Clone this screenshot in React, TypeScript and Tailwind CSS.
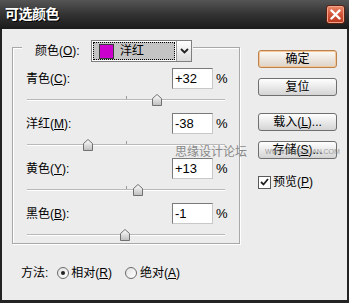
import React from "react";

type ChannelRow = {
  label: string;
  key: string;
  value: number;
};

const rows: ChannelRow[] = [
  { label: "青色(", key: "C", value: 32 },
  { label: "洋红(", key: "M", value: -38 },
  { label: "黄色(", key: "Y", value: 13 },
  { label: "黑色(", key: "B", value: -1 },
];

const fmt = (v: number) => (v > 0 ? `+${v}` : `${v}`);

const Thumb: React.FC = () => (
  <svg width="10" height="12" viewBox="0 0 10 12">
    <defs>
      <linearGradient id="thumbFill" x1="0" y1="0" x2="0" y2="1">
        <stop offset="0" stopColor="#ffffff" />
        <stop offset="1" stopColor="#bdbdbd" />
      </linearGradient>
    </defs>
    <path
      d="M0.5 4.5 L5 0.5 L9.5 4.5 V11.5 H0.5 Z"
      fill="url(#thumbFill)"
      stroke="#707070"
    />
  </svg>
);

const Slider: React.FC<{ value: number }> = ({ value }) => {
  // track is 197px wide, -100..100
  const left = ((value + 100) / 200) * 197 - 5;
  return (
    <div className="relative h-[24px] ml-[14px] w-[198px]">
      <div className="absolute left-0 right-0 top-[10px] h-[2px] bg-[#b9b9b9] border-b border-white" />
      <div className="absolute left-[99px] top-[7px] w-px h-[3px] bg-[#9a9a9a]" />
      <div className="absolute top-[5px]" style={{ left }}>
        <Thumb />
      </div>
    </div>
  );
};

const Btn: React.FC<{ children: React.ReactNode; primary?: boolean }> = ({
  children,
  primary,
}) => (
  <div
    className={
      primary
        ? "flex items-center justify-center w-[79px] h-[18px] rounded-[3px] border border-[#b9824f] bg-gradient-to-b from-[#fdfaf6] to-[#dcd3c8] shadow-[inset_0_0_0_1px_#f6c898] text-[12px] text-black"
        : "flex items-center justify-center w-[79px] h-[18px] rounded-[3px] border border-[#6f6f6f] bg-gradient-to-b from-white to-[#d4d4d4] text-[12px] text-black"
    }
  >
    {children}
  </div>
);

const Radio: React.FC<{ checked?: boolean }> = ({ checked }) => (
  <div className="flex items-center justify-center w-[12px] h-[12px] rounded-full border border-[#6a6a6a] bg-gradient-to-br from-[#e2e2e2] to-white">
    {checked && <div className="w-[4px] h-[4px] rounded-full bg-[#222]" />}
  </div>
);

export default function App() {
  return (
    <div className="w-[349px] h-[303px] flex flex-col bg-[#232323] font-['Liberation_Sans','Noto_Sans_CJK_SC',sans-serif] text-black select-none">
      {/* title bar */}
      <div className="flex items-center justify-between h-[29px] pl-[5px] pr-[4px] bg-gradient-to-b from-[#555] via-[#333] to-[#1b1b1b]">
        <span className="text-[14px] font-bold text-white tracking-[-0.5px] [text-shadow:1px_1px_0_#000]">
          可选颜色
        </span>
        <div className="flex items-center justify-center w-[19px] h-[19px] rounded-[3px] border border-[#5b2114] bg-gradient-to-b from-[#ec8a6a] via-[#d2553a] to-[#b8391f] shadow-[inset_0_0_0_1px_#f3a58a]">
          <svg width="11" height="11" viewBox="0 0 11 11">
            <path d="M1.5 1.5 L9.5 9.5 M9.5 1.5 L1.5 9.5" stroke="#fff" strokeWidth="2.4" strokeLinecap="round" />
          </svg>
        </div>
      </div>

      {/* body */}
      <div className="relative flex-1 mx-[2px] mb-[3px] bg-[#ececec] flex flex-col">
        <div className="flex">
          {/* group box */}
          <div className="mt-[18px] ml-[10px] w-[228px] h-[197px] border border-[#a8a8a8] shadow-[1px_1px_0_#fff,inset_1px_1px_0_#fff] flex flex-col">
            <div className="-mt-[8px] ml-[9px] pl-[13px] pr-[1px] w-fit flex items-center bg-[#ececec] h-[22px]">
              <span className="text-[12px] w-[56px]">
                颜色(<span className="underline">O</span>):
              </span>
              <div className="flex items-center h-[22px] w-[101px] border border-[#7f7f7f] bg-white">
                <div className="flex items-center flex-1 h-[18px] mx-[1px] bg-[#c4c4c4] border border-dotted border-black">
                  <div className="ml-[5px] w-[15px] h-[15px] border border-[#3b3b3b] bg-[#cc00cc]" />
                  <span className="ml-[6px] text-[12px]">洋红</span>
                </div>
                <div className="flex items-center justify-center w-[15px] h-[20px] border-l border-[#9a9a9a] bg-gradient-to-b from-white to-[#dcdcdc]">
                  <svg width="9" height="6" viewBox="0 0 9 6">
                    <path d="M1 1 L4.5 4.5 L8 1" fill="none" stroke="#222" strokeWidth="1.8" />
                  </svg>
                </div>
              </div>
            </div>

            <div className="mt-[6px] flex flex-col">
              {rows.map((r) => (
                <div key={r.key} className="flex flex-col">
                  <div className="flex items-center h-[21px] pl-[13px]">
                    <span className="text-[12px] w-[146px]">
                      {r.label}
                      <span className="underline">{r.key}</span>):
                    </span>
                    <div className="flex items-center w-[41px] h-[21px] border border-[#7a7a7a] border-r-[#c8c8c8] border-b-[#c8c8c8] bg-white pl-[2px] text-[13px]">
                      {fmt(r.value)}
                    </div>
                    <span className="ml-[3px] text-[13px]">%</span>
                  </div>
                  <Slider value={r.value} />
                </div>
              ))}
            </div>
          </div>

          {/* buttons */}
          <div className="ml-[18px] mt-[21px] flex flex-col">
            <Btn primary>确定</Btn>
            <div className="mt-[10px]">
              <Btn>复位</Btn>
            </div>
            <div className="mt-[17px]">
              <Btn>载入(<span className="underline">L</span>)...</Btn>
            </div>
            <div className="mt-[10px]">
              <Btn>存储(<span className="underline">S</span>)...</Btn>
            </div>
            <div className="mt-[14px] flex items-center">
              <div className="flex items-center justify-center w-[13px] h-[13px] border border-[#5a5a5a] bg-white">
                <svg width="9" height="8" viewBox="0 0 9 8">
                  <path d="M1 4 L3.5 6.5 L8 1" fill="none" stroke="#222" strokeWidth="1.8" />
                </svg>
              </div>
              <span className="ml-[2px] text-[12px]">
                预览(<span className="underline">P</span>)
              </span>
            </div>
          </div>
        </div>

        {/* method */}
        <div className="mt-[21px] pl-[19px] flex items-center h-[16px] text-[12px]">
          <span>方法:</span>
          <div className="ml-[9px]">
            <Radio checked />
          </div>
          <span className="ml-[2px]">
            相对(<span className="underline">R</span>)
          </span>
          <div className="ml-[13px]">
            <Radio />
          </div>
          <span className="ml-[3px]">
            绝对(<span className="underline">A</span>)
          </span>
        </div>

        {/* watermark */}
        <div className="absolute left-[173px] top-[114px] flex items-center whitespace-nowrap text-[#8a8a8a] pointer-events-none">
          <span className="text-[12px]">思缘设计论坛</span>
          <span className="ml-[18px] text-[7px] tracking-[-0.1px] opacity-80">WWW.MISSYUAN.COM</span>
        </div>
      </div>
    </div>
  );
}
